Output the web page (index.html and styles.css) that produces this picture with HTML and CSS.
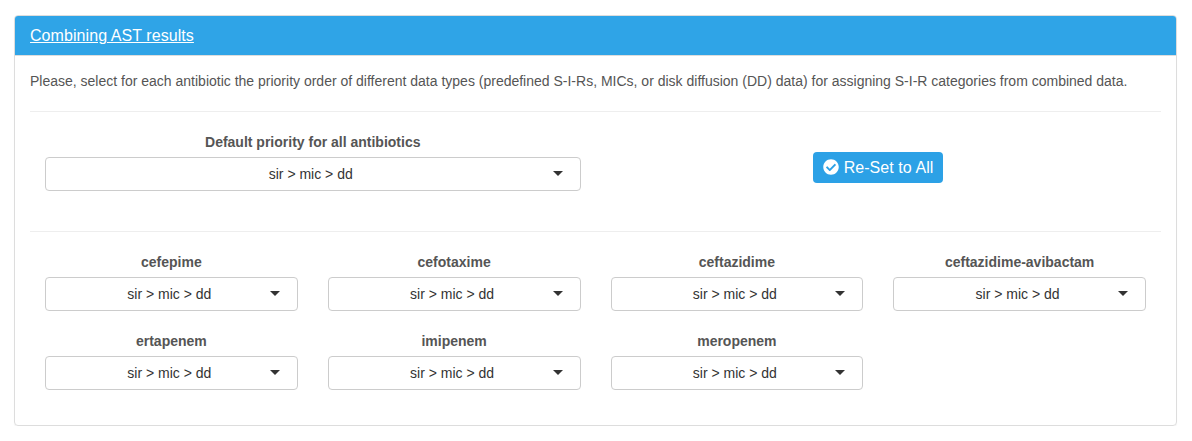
FILE: index.html
```html
<!DOCTYPE html>
<html lang="en">
<head>
<meta charset="utf-8">
<title>Combining AST results</title>
<link rel="stylesheet" href="styles.css">
</head>
<body>
<section class="panel">
  <header class="panel-heading"><a class="panel-title">Combining AST results</a></header>
  <div class="panel-body">
    <p class="intro">Please, select for each antibiotic the priority order of different data types (predefined S-I-Rs, MICs, or disk diffusion (DD) data) for assigning S-I-R categories from combined data.</p>
    <hr class="rule">
    <div class="row default-row">
      <div class="field wide"><label class="label">Default priority for all antibiotics</label><button class="select"><span class="value">sir &gt; mic &gt; dd</span><span class="caret"></span></button></div>
      <div class="action">
        <button class="btn"><svg class="icon" viewBox="0 0 512 512"><path fill="currentColor" d="M504 256c0 136.967-111.033 248-248 248S8 392.967 8 256 119.033 8 256 8s248 111.033 248 248zM227.314 387.314l184-184c6.248-6.248 6.248-16.379 0-22.627l-22.627-22.627c-6.248-6.249-16.379-6.249-22.628 0L216 308.118l-70.059-70.059c-6.248-6.248-16.379-6.248-22.628 0l-22.627 22.627c-6.248 6.248-6.248 16.379 0 22.627l104 104c6.249 6.249 16.379 6.249 22.628.001z"/></svg> Re-Set to All</button>
      </div>
    </div>
    <hr class="rule">
    <div class="row">
      <div class="field"><label class="label">cefepime</label><button class="select"><span class="value">sir &gt; mic &gt; dd</span><span class="caret"></span></button></div>
      <div class="field"><label class="label">cefotaxime</label><button class="select"><span class="value">sir &gt; mic &gt; dd</span><span class="caret"></span></button></div>
      <div class="field"><label class="label">ceftazidime</label><button class="select"><span class="value">sir &gt; mic &gt; dd</span><span class="caret"></span></button></div>
      <div class="field"><label class="label">ceftazidime-avibactam</label><button class="select"><span class="value">sir &gt; mic &gt; dd</span><span class="caret"></span></button></div>
      <div class="field"><label class="label">ertapenem</label><button class="select"><span class="value">sir &gt; mic &gt; dd</span><span class="caret"></span></button></div>
      <div class="field"><label class="label">imipenem</label><button class="select"><span class="value">sir &gt; mic &gt; dd</span><span class="caret"></span></button></div>
      <div class="field"><label class="label">meropenem</label><button class="select"><span class="value">sir &gt; mic &gt; dd</span><span class="caret"></span></button></div>
    </div>
  </div>
</section>
</body>
</html>
```

FILE: styles.css
```css
* { box-sizing: border-box; }
body {
  margin: 0;
  padding: 15px 15px 0 14px;
  background: #fff;
  color: #555;
  font: 14px/20px "Liberation Sans", Arial, sans-serif;
}
.panel {
  height: 411px;
  border: 1px solid #ddd;
  border-radius: 4px;
  box-shadow: 0 1px 1px rgba(0, 0, 0, .05);
}
.panel-heading {
  height: 40px;
  padding: 10px 15px;
  border-bottom: 1px solid #ddd;
  border-radius: 3px 3px 0 0;
  background: #2fa4e7;
  background-clip: padding-box;
  color: #fff;
  font-size: 16px;
  line-height: 20px;
}
.panel-title {
  letter-spacing: .07px;
  text-decoration: underline;
}
.panel-body { padding: 15px; }
.intro { margin: 0; white-space: nowrap; }
.rule {
  height: 1px;
  margin: 20px 0;
  border: 0;
  background: #eee;
}
.row {
  display: grid;
  grid-template-columns: repeat(4, 1fr);
}
.field {
  height: 79px;
  padding: 0 15px;
}
.wide, .action { grid-column: span 2; }
.label {
  display: block;
  margin-bottom: 5px;
  font-weight: bold;
  text-align: center;
}
.select {
  display: flex;
  align-items: center;
  width: 100%;
  height: 34px;
  padding: 0 17px 0 23px;
  border: 1px solid #ccc;
  border-radius: 4px;
  background: #fff;
  color: #333;
  font: inherit;
}
.value { flex: 1; text-align: center; }
.caret {
  margin-bottom: 2px;
  border-top: 5px solid #333;
  border-right: 5px solid transparent;
  border-left: 5px solid transparent;
}
.action { text-align: center; padding-top: 20px; }
.btn {
  height: 31px;
  padding: 0 10px;
  border: 0;
  border-radius: 4px;
  background: #2ca1e6;
  color: #fff;
  font: 16px/31px "Liberation Sans", Arial, sans-serif;
  letter-spacing: .06px;
}
.icon {
  width: 16px;
  height: 16px;
  vertical-align: -2px;
}
```
